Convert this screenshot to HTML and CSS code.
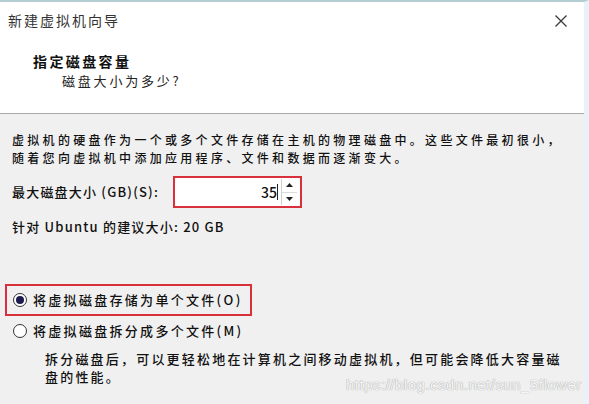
FILE: index.html
```html
<!DOCTYPE html>
<html lang="zh-CN">
<head>
<meta charset="utf-8">
<title>新建虚拟机向导</title>
<link rel="stylesheet" href="styles.css">
</head>
<body>
<div class="window">
  <header class="header">
    <div class="titlebar">
      <span class="title">新建虚拟机向导</span>
      <svg class="close" width="12" height="12" viewBox="0 0 12 12" aria-label="关闭">
        <path d="M0.5 0.5 L11.5 11.5 M11.5 0.5 L0.5 11.5" stroke="#3a3a3a" stroke-width="1.3" fill="none"/>
      </svg>
    </div>
    <div class="heading">指定磁盘容量</div>
    <div class="subheading">磁盘大小为多少?</div>
  </header>
  <main class="content">
    <p class="intro"><span class="line">虚拟机的硬盘作为一个或多个文件存储在主机的物理磁盘中。这些文件最初很小，</span><span class="line">随着您向虚拟机中添加应用程序、文件和数据而逐渐变大。</span></p>
    <div class="size-row">
      <span class="label">最大磁盘大小 (GB)(S):</span>
      <div class="spin-box">
        <div class="spin-input"><span class="value">35</span><span class="caret"></span></div>
        <div class="spin-buttons">
          <span class="spin-btn"><svg width="7" height="4" viewBox="0 0 7 4"><path d="M3.5 0 L7 4 L0 4 Z" fill="#222"/></svg></span>
          <span class="spin-btn"><svg width="7" height="4" viewBox="0 0 7 4"><path d="M0 0 L7 0 L3.5 4 Z" fill="#222"/></svg></span>
        </div>
      </div>
    </div>
    <p class="suggest">针对 Ubuntu 的建议大小: 20 GB</p>
    <label class="radio-row selected-box">
      <span class="radio checked"><span class="dot"></span></span>
      <span class="radio-text">将虚拟磁盘存储为单个文件(O)</span>
    </label>
    <label class="radio-row plain">
      <span class="radio"></span>
      <span class="radio-text">将虚拟磁盘拆分成多个文件(M)</span>
    </label>
    <p class="desc"><span class="line">拆分磁盘后，可以更轻松地在计算机之间移动虚拟机，但可能会降低大容量磁</span><span class="line">盘的性能。</span></p>
  </main>
  <div class="watermark">https://blog.csdn.net/sun_5flower</div>
</div>
</body>
</html>
```

FILE: styles.css
```css
html, body {
  margin: 0;
  padding: 0;
}
body {
  width: 589px;
  height: 404px;
  overflow: hidden;
  background: #f0f0f0;
  font-family: "Noto Sans CJK SC", "Noto Sans", sans-serif;
  color: #111;
}
.window {
  position: relative;
  width: 589px;
  height: 404px;
  box-sizing: border-box;
  border-top: 2px solid #b3cdd2;
  border-right: 5px solid #e9f2fa;
  background: #f0f0f0;
}
.header {
  height: 111px;
  background: #ffffff;
  border-bottom: 1px solid #a8a8a8;
}
.titlebar {
  display: flex;
  align-items: center;
  justify-content: space-between;
  padding: 8px 0 0 8px;
  height: 20px;
}
.title {
  font-size: 14px;
  line-height: 20px;
  letter-spacing: 2px;
  color: #333;
}
.close {
  margin-right: 17px;
  margin-top: 1px;
}
.heading {
  margin: 21px 0 0 33px;
  font-size: 14px;
  line-height: 20px;
  font-weight: bold;
  letter-spacing: 2.4px;
  color: #111;
}
.subheading {
  margin-left: 62px;
  font-size: 13px;
  line-height: 20px;
  letter-spacing: 2.8px;
  color: #222;
}
.content {
  padding-left: 12px;
  font-size: 13px;
  font-weight: 500;
  letter-spacing: 2.3px;
}
.line {
  display: block;
}
.intro {
  margin: 17px 0 0 0;
  font-size: 12px;
  letter-spacing: 3.3px;
}
.intro .line {
  line-height: 17.5px;
}
.size-row {
  display: flex;
  align-items: center;
  margin-top: 10px;
  height: 32px;
}
.label {
  width: 161px;
  letter-spacing: 1.2px;
  line-height: 20px;
}
.spin-box {
  display: flex;
  width: 129px;
  height: 32px;
  box-sizing: border-box;
  border: 2px solid #d8313c;
  background: #fff;
  padding: 1px 3px 1px 1px;
}
.spin-input {
  flex: 1;
  display: flex;
  align-items: center;
  justify-content: flex-end;
  padding-right: 3px;
  font-size: 14px;
  letter-spacing: 0;
}
.value {
  line-height: 20px;
}
.caret {
  width: 1px;
  height: 16px;
  background: #222;
}
.spin-buttons {
  display: flex;
  flex-direction: column;
  width: 15px;
  border-left: 1px solid #cfcfcf;
}
.spin-btn {
  flex: 1;
  display: flex;
  align-items: center;
  justify-content: center;
}
.spin-btn + .spin-btn {
  border-top: 1px solid #dcdcdc;
}
.suggest {
  margin: 9px 0 0 0;
  line-height: 20px;
  letter-spacing: 1.2px;
}
.radio-row {
  display: flex;
  align-items: center;
  line-height: 20px;
}
.selected-box {
  margin: 47px 0 0 -7px;
  width: fit-content;
  height: 32px;
  box-sizing: border-box;
  border: 2px solid #d8313c;
  padding: 0 7px 0 6px;
}
.plain {
  margin: 5px 0 0 1px;
  height: 20px;
}
.radio {
  width: 14px;
  height: 14px;
  box-sizing: border-box;
  border: 1px solid #333;
  border-radius: 50%;
  background: #fff;
  display: flex;
  align-items: center;
  justify-content: center;
  margin-right: 6px;
  flex: none;
}
.dot {
  width: 8px;
  height: 8px;
  border-radius: 50%;
  background: #1d1b4d;
}
.radio-text {
  letter-spacing: 2.3px;
}
.desc {
  margin: 9px 0 0 33px;
}
.desc .line {
  height: 18px;
  line-height: 18px;
  letter-spacing: 2.2px;
}
.watermark {
  position: absolute;
  left: 346px;
  top: 373px;
  font-family: "Liberation Sans", Arial, sans-serif;
  font-size: 15px;
  letter-spacing: 0.5px;
  line-height: 20px;
  color: #f6f6f6;
  text-shadow: 0 0 1px #a8a8a8, 0 0 1px #a8a8a8;
}
```
